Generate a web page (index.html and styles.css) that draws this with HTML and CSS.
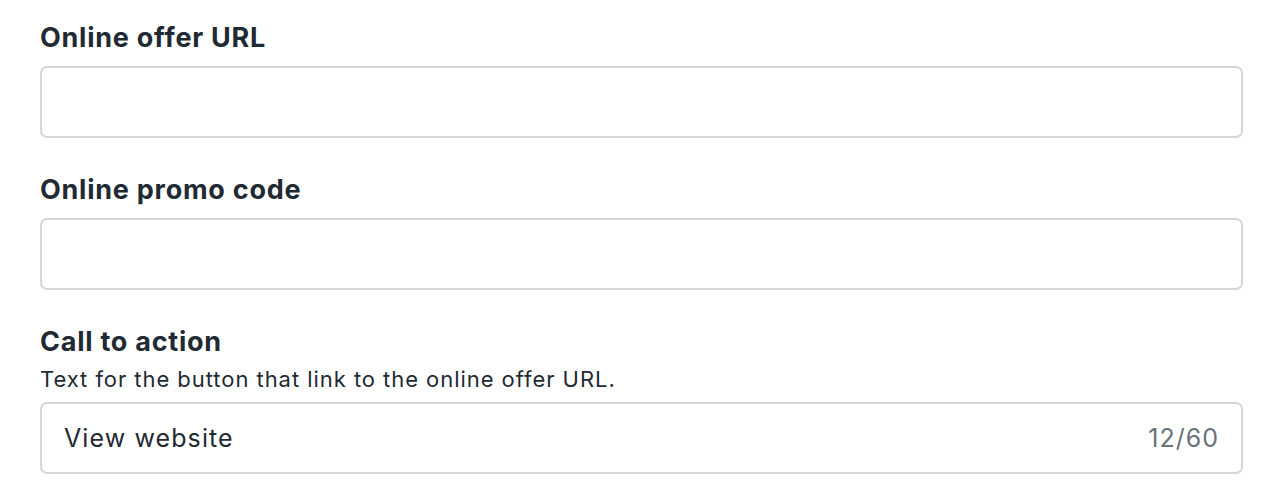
FILE: index.html
```html
<!DOCTYPE html>
<html lang="en">
<head>
<meta charset="utf-8">
<link rel="stylesheet" href="styles.css">
</head>
<body>
<form class="form">
  <div class="field">
    <label class="label" for="url">Online offer URL</label>
    <div class="input"><input id="url" class="control" type="text"></div>
  </div>
  <div class="field">
    <label class="label" for="promo">Online promo code</label>
    <div class="input"><input id="promo" class="control" type="text"></div>
  </div>
  <div class="field">
    <label class="label" for="cta">Call to action</label>
    <p class="help">Text for the button that link to the online offer URL.</p>
    <div class="input"><input id="cta" class="control" type="text" value="View website"><span class="counter">12/60</span></div>
  </div>
</form>
</body>
</html>
```

FILE: styles.css
```css
* { box-sizing: border-box; }
html, body { margin: 0; padding: 0; background: #fff; }
body {
  font-family: Inter, "Noto Sans", sans-serif;
  color: #1f2933;
}
.form {
  display: flex;
  flex-direction: column;
  gap: 37px;
  padding: 23px 37px 0 40px;
}
.field {
  display: flex;
  flex-direction: column;
}
.label {
  font-size: 27px;
  font-weight: 700;
  line-height: 30px;
  letter-spacing: 0.75px;
  margin-bottom: 13px;
  color: #1f2a33;
}
.help {
  margin: -3px 0 11px;
  font-size: 22px;
  line-height: 24px;
  letter-spacing: 0.95px;
  color: #1f2a33;
}
.input {
  display: flex;
  align-items: center;
  height: 72px;
  border: 2px solid #d3d6da;
  border-radius: 7px;
  padding: 0 22px;
  background: #fff;
}
.control {
  flex: 1;
  border: 0;
  outline: none;
  background: transparent;
  font-family: inherit;
  font-size: 25px;
  letter-spacing: 1.1px;
  color: #1f2a33;
  padding: 0;
}
.counter {
  font-size: 25px;
  letter-spacing: 1px;
  color: #6b7279;
}
```
